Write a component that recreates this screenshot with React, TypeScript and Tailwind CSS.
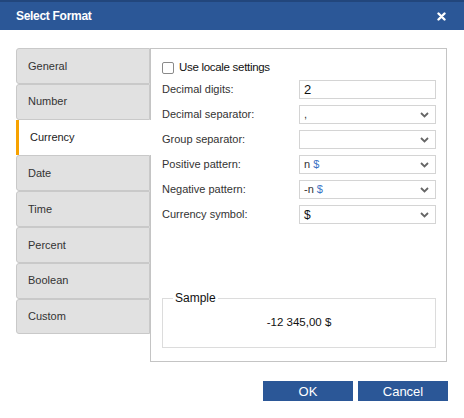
const tabs = ['General', 'Number', 'Currency', 'Date', 'Time', 'Percent', 'Boolean', 'Custom'];

function Chevron() {
  return (
    <svg width="9" height="6" viewBox="0 0 9 6" className="mr-[2px]">
      <path d="M1 1 L4.5 4.5 L8 1" fill="none" stroke="#666" strokeWidth="1.8" />
    </svg>
  );
}

function Select({ children }: { children?: React.ReactNode }) {
  return (
    <div className="flex h-[19px] w-[137px] items-center border border-[#d4d4d4] bg-white pl-[4px] pr-[4px] text-[11px] text-[#333]">
      <div className="flex-1 leading-none">{children}</div>
      <Chevron />
    </div>
  );
}

function Row({ label, children }: { label: string; children: React.ReactNode }) {
  return (
    <div className="flex h-[19px] items-center">
      <div className="w-[137px] text-[11px] text-[#333]">{label}</div>
      {children}
    </div>
  );
}

export default function App() {
  return (
    <div className="h-[418px] w-[464px] bg-white font-['Liberation_Sans',Arial,sans-serif]">
      {/* header */}
      <div className="flex h-[30px] items-center justify-between border-t-2 border-[#22467c] bg-[#2b5797] pl-[16px] pr-[18px]">
        <span className="text-[12px] font-bold tracking-[-0.3px] text-white">Select Format</span>
        <svg width="9" height="9" viewBox="0 0 9 9">
          <path d="M1.5 1.5 L7.5 7.5 M7.5 1.5 L1.5 7.5" stroke="white" strokeWidth="2.4" strokeLinecap="round" />
        </svg>
      </div>

      <div className="flex pl-[16px] pt-[18px]">
        {/* tabs */}
        <div className="relative z-10 flex w-[135px] flex-col">
          {tabs.map((t) =>
            t === 'Currency' ? (
              <div
                key={t}
                className="flex h-[35.8px] items-center border-l-[3px] border-[#f7a200] bg-white pl-[11px] text-[11px] text-[#222]"
              >
                {t}
              </div>
            ) : (
              <div
                key={t}
                className="mr-px flex h-[35.8px] items-center rounded-l-[3px] border border-[#c9c9c9] bg-[#e1e1e1] pl-[11px] text-[11px] text-[#333]"
              >
                {t}
              </div>
            )
          )}
        </div>

        {/* panel */}
        <div className="-ml-px flex h-[314px] w-[297px] flex-col border border-[#c4c4c4] pl-[11px] pr-[10px] pt-[13px]">
          <div className="flex h-[11px] items-center gap-[5px]">
            <div className="h-[12px] w-[12px] rounded-[2px] border border-[#8a8a8a] bg-white" />
            <span className="text-[11.5px] tracking-[-0.3px] text-[#111]">Use locale settings</span>
          </div>

          <div className="mt-[7px] flex flex-col gap-[6px]">
            <Row label="Decimal digits:">
              <div className="flex h-[19px] w-[137px] items-center border border-[#d4d4d4] bg-white pl-[4px] text-[13px] text-[#111]">
                2
              </div>
            </Row>
            <Row label="Decimal separator:">
              <Select>,</Select>
            </Row>
            <Row label="Group separator:">
              <Select />
            </Row>
            <Row label="Positive pattern:">
              <Select>
                n <span className="text-[#3b73c4]">$</span>
              </Select>
            </Row>
            <Row label="Negative pattern:">
              <Select>
                -n <span className="text-[#3b73c4]">$</span>
              </Select>
            </Row>
            <Row label="Currency symbol:">
              <Select>
                <span className="text-[12px] text-[#111]">$</span>
              </Select>
            </Row>
          </div>

          <fieldset className="mt-[65px] h-[59px] w-[274px] border border-[#dcdcdc] px-[10px]">
            <legend className="px-[2px] text-[12px] text-[#111]">Sample</legend>
            <div className="mt-[7px] text-center text-[11.5px] text-[#111]">-12 345,00 $</div>
          </fieldset>
        </div>
      </div>

      {/* footer */}
      <div className="flex justify-end gap-[5px] pr-[16px] pt-[19px]">
        <button className="h-[20px] w-[90px] bg-[#2b5797] text-[13px] leading-none text-white">OK</button>
        <button className="h-[20px] w-[90px] bg-[#2b5797] text-[13px] leading-none text-white">Cancel</button>
      </div>
    </div>
  );
}
